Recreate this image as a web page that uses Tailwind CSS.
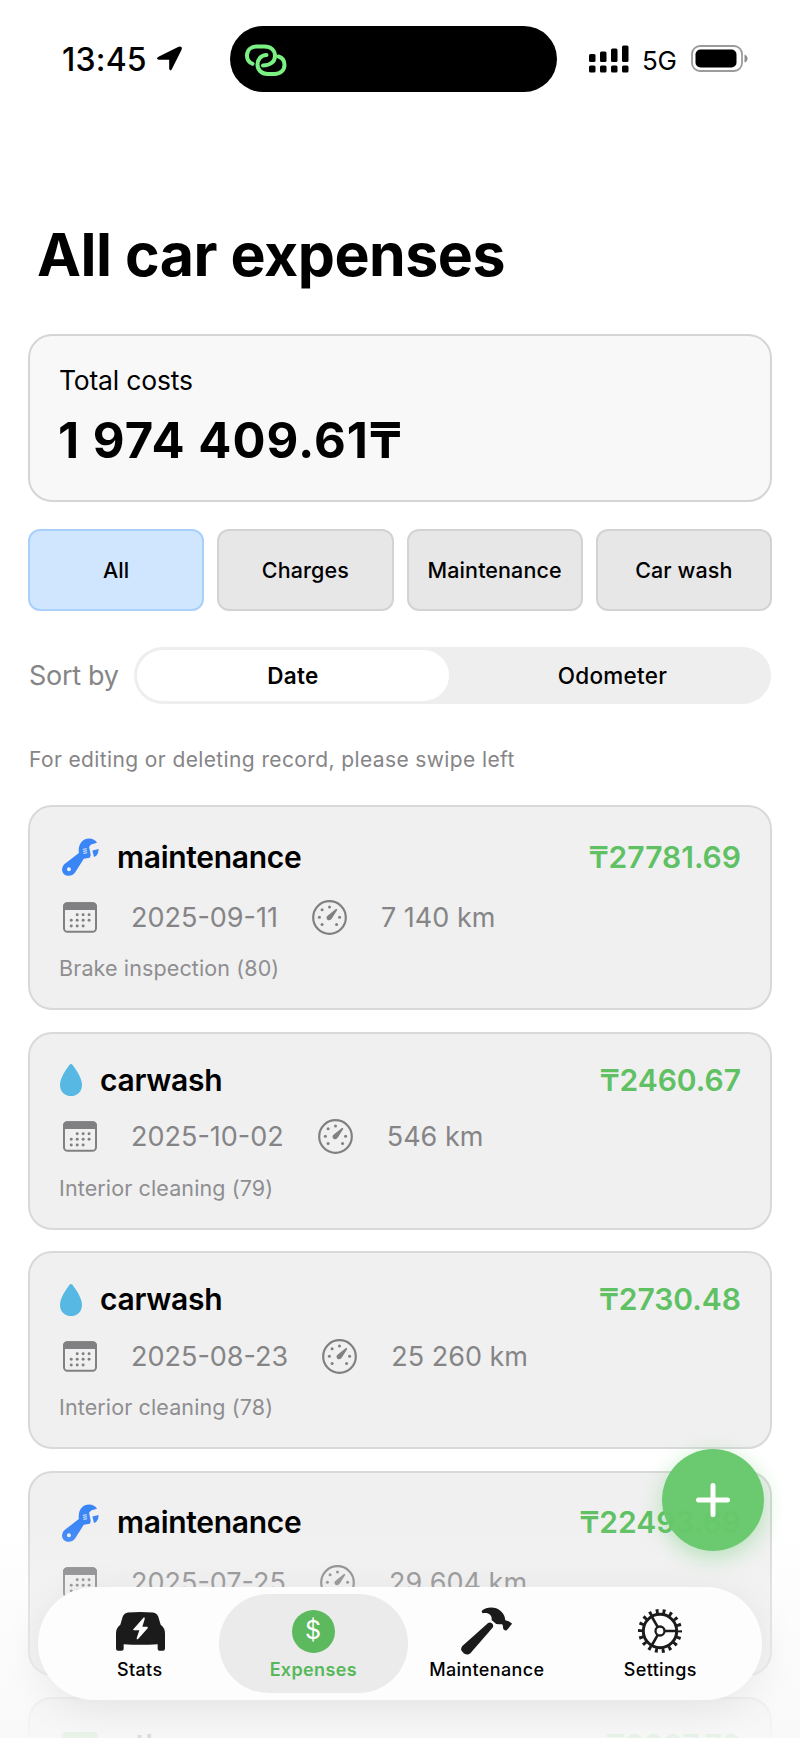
<!DOCTYPE html>
<html lang="en">
<head>
    <meta charset="UTF-8">
    <meta name="viewport" content="width=device-width, initial-scale=1.0">
    <title>All car expenses</title>
    <script src="https://cdn.jsdelivr.net/npm/@tailwindcss/browser@4"></script>
    <style>
        body { font-family: 'Inter', sans-serif; }
    </style>
</head>
<body class="relative h-screen overflow-hidden bg-white text-black">

    <!-- Status bar -->
    <div class="relative flex h-[117px] items-center whitespace-nowrap">
        <div class="ml-[62px] flex w-[168px] items-center gap-[5px]">
            <span class="w-[90px] pt-[2px] text-[32px] font-medium leading-10 tracking-[0.2px]">13:45</span>
            <svg width="25" height="25" viewBox="0 0 76 74"><path d="M74 2Q77 5 74 12L45 70Q42 75 39 72Q37 70 37 66V41L6 41Q0 40 0 37Q0 34 6 31L64 2Q71-1 74 2Z"/></svg>
        </div>
        <div class="flex h-[66px] w-[327px] items-center rounded-full bg-black pl-[14px]">
            <svg width="43" height="36" viewBox="0 0 43 36" fill="none" stroke="#7cf183" stroke-width="4" stroke-linecap="round">
                <path d="M8.5 22.8C4.5 21 2.8 17.5 3 14C3.4 8.5 7.5 5.5 12.5 5.5H20.5C27 5.500 31 9.500 31 15C31 20.500 26.500 24.500 19 24.500"/>
                <path d="M22.500 14C17 14 13.500 18.500 13.500 23.500C13.500 29 17.500 33 23.500 33H30.500C36.500 33 40.500 29 40.500 24C40.500 19.500 38 16.500 34.500 15.500"/>
            </svg>
        </div>
        <svg class="ml-8" width="40" height="28" viewBox="0 0 40 28">
            <rect x="0" y="9" width="6.500" height="8" rx="1.500"/><rect x="11" y="6.500" width="6.500" height="10.500" rx="1.500"/>
            <rect x="22" y="3.500" width="6.500" height="13.500" rx="1.500"/><rect x="33" y="0.500" width="6.500" height="16.500" rx="1.500"/>
            <rect x="0" y="20.500" width="6.500" height="7" rx="1.500"/><rect x="11" y="20.500" width="6.500" height="7" rx="1.500"/>
            <rect x="22" y="20.500" width="6.500" height="7" rx="1.500"/><rect x="33" y="20.500" width="6.500" height="7" rx="1.500"/>
        </svg>
        <span class="ml-[13px] mt-[4px] w-[49px] text-[26px] leading-8 tracking-[-0.3px]">5G</span>
        <svg width="57" height="27" viewBox="0 0 57 27">
            <rect x="1" y="1" width="50" height="25" rx="8" fill="none" stroke="#9b9b9b" stroke-width="1.800"/>
            <rect x="4.500" y="4.500" width="41" height="18" rx="5"/>
            <path d="M53.500 9.500Q56.500 10.500 56.500 13.500T53.500 17.500Z" fill="#8c8c8c"/>
        </svg>
    </div>

    <main class="px-7 pt-[101px]">
        <h1 class="pl-[9px] text-[59px] font-bold leading-[73px] tracking-[-0.5px] whitespace-nowrap">All car expenses</h1>

        <!-- Total -->
        <section class="mt-[43px] h-[168px] rounded-3xl border-2 border-[#d5d5d5] bg-[#f8f8f8] px-[29px] pt-[26px]">
            <p class="text-[26.500px] leading-9 tracking-[-0.2px]">Total costs</p>
            <p class="mt-[13px] -ml-px text-[49px] font-bold leading-[60px] tracking-[1.05px] whitespace-nowrap">1 974 409.61₸</p>
        </section>

        <!-- Filters -->
        <div class="mt-[27px] grid h-[82px] grid-cols-4 gap-[13px] text-[21.500px] font-medium tracking-[0.1px]">
            <button class="rounded-xl border-2 border-[#a9d0fb] bg-[#d0e6ff]">All</button>
            <button class="rounded-xl border-2 border-[#d3d3d3] bg-[#e7e7e7]">Charges</button>
            <button class="rounded-xl border-2 border-[#d3d3d3] bg-[#e7e7e7]">Maintenance</button>
            <button class="rounded-xl border-2 border-[#d3d3d3] bg-[#e7e7e7]">Car wash</button>
        </div>

        <!-- Sorting -->
        <div class="mt-9 flex h-[57px] items-center justify-between">
            <span class="pl-px pt-[2px] text-[27px] tracking-[-0.3px] text-[#858587]">Sort by</span>
            <div class="mr-px grid h-full w-[637px] grid-cols-[312px_1fr] rounded-full bg-[#eeeeee] p-[3px] text-[22.500px] tracking-[0.3px]">
                <button class="rounded-full bg-white font-semibold">Date</button>
                <button class="pl-2 font-medium">Odometer</button>
            </div>
        </div>

        <p class="mt-[41px] pl-px text-[21px] leading-[30px] tracking-[0.38px] text-[#858587]">For editing or deleting record, please swipe left</p>

        <div id="records" class="mt-[30px] flex flex-col gap-[21.500px]"></div>
    </main>

    <!-- Bottom fade -->
    <div class="absolute inset-x-0 bottom-0 h-[215px] bg-linear-to-b from-[#f8f8f8]/0 to-[#f8f8f8]/90"></div>

    <!-- Add button -->
    <button class="absolute left-[662px] top-[1449px] flex size-[102px] items-center justify-center rounded-full bg-[#66c86a]/97 shadow-[0_6px_22px_rgba(90,200,100,0.4)]">
        <svg width="34" height="34" viewBox="0 0 34 34" stroke="#fff" stroke-width="5" stroke-linecap="round"><path d="M17 2.500V31.500M2.500 17H31.500"/></svg>
    </button>

    <!-- Tab bar -->
    <nav class="absolute left-[38px] top-[1587px] grid h-[113px] w-[724px] grid-cols-4 rounded-full bg-[#fdfdfd] px-[15px] pt-[18px] text-[18px] font-medium tracking-[0.35px] shadow-[0_8px_40px_rgba(0,0,0,0.08)]">
        <a class="flex flex-col items-center">
            <span class="flex h-[52px] items-center pl-[2px]">
                <svg width="49" height="39" viewBox="0 0 147 116">
                    <path fill="#1b1b1b" d="M36 1Q73-2 111 1Q122 2 127 14L134 38Q147 48 147 64V109Q147 116 141 116H130Q125 116 125 110V96Q73 100 23 96V110Q23 116 17 116H6Q0 116 0 109V64Q0 48 13 38L20 14Q25 2 36 1Z"/>
                    <path fill="#fdfdfd" d="M83 16L52 51Q50 54 54 54H70L62 78Q62 84 67 80L95 48Q97 44 93 44H79L86 21Q87 14 83 16Z"/>
                </svg>
            </span>
            <span class="pt-px leading-6">Stats</span>
        </a>
        <a class="relative flex flex-col items-center font-semibold text-[#57b85a]">
            <span class="absolute -inset-x-2 -top-[11px] bottom-[7px] rounded-full bg-[#ebebeb]"></span>
            <span class="relative flex h-[52px] items-center">
                <span class="flex size-[43px] items-center justify-center rounded-full bg-[#5cb95e] text-[25px] font-normal text-white">$</span>
            </span>
            <span class="relative pt-px leading-6">Expenses</span>
        </a>
        <a class="flex flex-col items-center">
            <span class="flex h-[52px] items-center">
                <svg width="51" height="48" viewBox="0 0 152 142" fill="#1b1b1b">
                    <path d="M4 116L80 48Q86 43 92 48Q99 54 94 61L28 137Q20 145 9 138Q-5 128 4 116Z"/>
                    <path d="M63 10C76-1 103-3 119 12C129 21 131 30 132 39L142 42L152 49Q151 52 136 69Q132 71 126 65Q126 57 123 51L113 51L105 50L91 38C94 26 84 14 65 18Q60 15 63 10Z"/>
                </svg>
            </span>
            <span class="pt-px leading-6">Maintenance</span>
        </a>
        <a class="flex flex-col items-center">
            <span class="flex h-[52px] items-center">
                <svg width="46" height="46" viewBox="-23 -23 46 46" fill="none" stroke="#1b1b1b">
                    <circle r="16.700" stroke-width="3"/>
                    <circle r="19.800" stroke-width="4.400" stroke-dasharray="2.900 4.011" stroke-dashoffset="1.450"/>
                    <circle r="4.500" stroke-width="2.300"/>
                    <path stroke-width="2.600" d="M5 0H16M-2.500 -4.300L-8 -14M-2.500 4.300L-8 14"/>
                </svg>
            </span>
            <span class="pt-px leading-6">Settings</span>
        </a>
    </nav>

    <script>
        const records = [
            { type: 'maintenance', price: '₸27781.69', date: '2025-09-11', km: '7 140 km', note: 'Brake inspection (80)' },
            { type: 'carwash', price: '₸2460.67', date: '2025-10-02', km: '546 km', note: 'Interior cleaning (79)' },
            { type: 'carwash', price: '₸2730.48', date: '2025-08-23', km: '25 260 km', note: 'Interior cleaning (78)' },
            { type: 'maintenance', price: '₸22493.69', date: '2025-07-25', km: '29 604 km' },
            { type: 'other', price: '₸2207.70' },
        ];

        const icons = {
            maintenance: `<span class="w-[42px] pl-[3px]"><svg width="37" height="38" viewBox="0 0 112 114">
                <path fill="#3a86f7" fill-rule="evenodd" d="M7 79L51 45C48 18 62 1 82 1C93 1 102 6 106 14L88 19L82 26L87 52L84 59L66 62L42 100C37 110 29 114 20 114C8 114 0 105 0 94Q0 85 7 79ZM21 88A6 6 0 1 0 21 100A6 6 0 1 0 21 88Z"/>
                <path fill="#3a86f7" d="M92 37L111 33Q111 46 104 53L97 57Z"/>
                <path stroke="#f0f0f0" stroke-width="3" d="M63 34L75 32M64 40L76 38M65 46L76 44"/></svg></span>`,
            carwash: `<span class="w-[25px] pl-[1px]"><svg width="22" height="32" viewBox="0 0 66 96">
                <path fill="#57b9e3" d="M28 3Q33-3 38 3C48 17 66 42 66 62C66 83 52 96 33 96S0 83 0 62C0 42 18 17 28 3Z"/></svg></span>`,
            other: `<span class="w-[42px] pl-[3px]"><svg width="36" height="28" viewBox="0 0 36 28"><rect width="36" height="28" rx="4" fill="#6fcf73"/></svg></span>`,
        };

        const calendar = `<svg class="ml-1" width="34" height="31" viewBox="0 0 103 93" fill="#808082">
            <rect x="3" y="3" width="97" height="87" rx="11" fill="none" stroke="#808082" stroke-width="6"/>
            <path d="M0 24V14Q0 0 14 0H89Q103 0 103 14V24Z"/>
            <circle cx="43" cy="38" r="4.500"/><circle cx="61" cy="38" r="4.500"/><circle cx="79" cy="38" r="4.500"/>
            <circle cx="25" cy="55" r="4.500"/><circle cx="43" cy="55" r="4.500"/><circle cx="61" cy="55" r="4.500"/><circle cx="79" cy="55" r="4.500"/>
            <circle cx="25" cy="72" r="4.500"/><circle cx="43" cy="72" r="4.500"/><circle cx="61" cy="72" r="4.500"/></svg>`;

        const gauge = `<svg width="35" height="35" viewBox="0 0 104 104" fill="#808082">
            <circle cx="52" cy="52" r="48.500" fill="none" stroke="#808082" stroke-width="6.500"/>
            <circle cx="22" cy="51" r="4.500"/><circle cx="30" cy="29" r="4.500"/><circle cx="52" cy="21" r="4.500"/>
            <circle cx="82" cy="51" r="4.500"/><circle cx="30" cy="73" r="4.500"/><circle cx="73" cy="73" r="4.500"/>
            <path d="M71 27Q75 25 75 30L59 55Q55 62 48 60Q41 56 44 49Q45 47 48 45Z"/></svg>`;

        document.getElementById('records').innerHTML = records.map(r => `
            <article class="${r.type === 'maintenance' ? 'h-[205px]' : 'h-[198px]'} rounded-3xl border-2 border-[#d9d9da] bg-[#f0f0f0] px-[29px] pt-[27px] whitespace-nowrap">
                <div class="flex items-center ${r.type === 'maintenance' ? 'h-[46px]' : 'h-[39px]'}">
                    ${icons[r.type]}
                    <span class="ml-[16px] text-[30px] font-semibold tracking-[-0.3px]">${r.type}</span>
                    <span class="ml-auto text-[30px] font-semibold text-[#5fc163]">${r.price}</span>
                </div>
                ${r.date ? `<div class="mt-[18px] flex h-[38px] items-center gap-[34px] text-[27px] text-[#858587]">
                    ${calendar}<span class="pt-[2px]">${r.date}</span>${gauge}<span class="pt-[2px]">${r.km}</span>
                </div>` : ''}
                ${r.note ? `<p class="mt-[17px] text-[21.500px] leading-[30px] tracking-[0.12px] text-[#8e8e90]">${r.note}</p>` : ''}
            </article>`).join('');
    </script>

</body>
</html>
